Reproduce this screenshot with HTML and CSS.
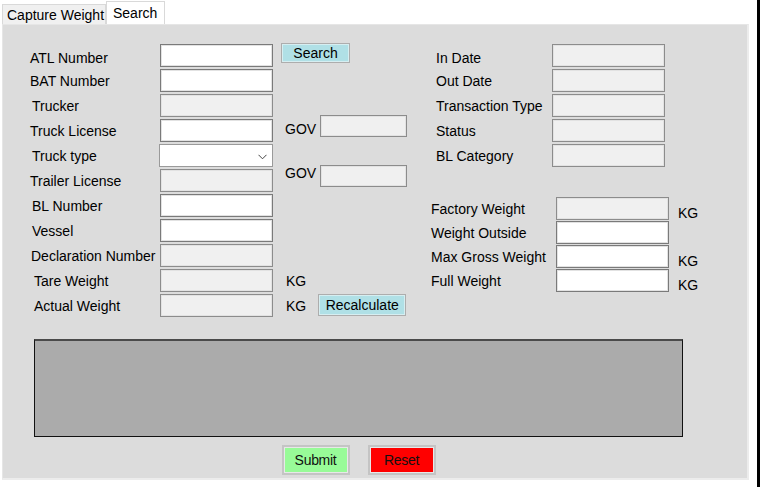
FILE: index.html
```html
<!DOCTYPE html>
<html>
<head>
<meta charset="utf-8">
<link rel="stylesheet" href="styles.css">
</head>
<body>
<div class="window">
  <div class="tabs">
    <div class="tab">Capture Weight</div>
    <div class="tab active">Search</div>
  </div>
  <div class="page">
    <div class="form">
      <div class="col-left">
        <div class="lbl low">ATL Number</div>
        <div class="inp"></div>
        <div class="cell"><button class="btn-blue search">Search</button></div>

        <div class="lbl">BAT Number</div>
        <div class="inp"></div>
        <div class="cell"></div>

        <div class="lbl i2">Trucker</div>
        <div class="inp dis"></div>
        <div class="cell"></div>

        <div class="lbl">Truck License</div>
        <div class="inp"></div>
        <div class="cell gov gov-a"><span class="gov-lbl">GOV</span><div class="inp dis gov-inp"></div></div>

        <div class="lbl i2">Truck type</div>
        <div class="inp select"><svg class="chev" width="9" height="6" viewBox="0 0 9 6"><path d="M0.5 0.8 L4.5 4.8 L8.5 0.8" fill="none" stroke="#444" stroke-width="1"/></svg></div>
        <div class="cell"></div>

        <div class="lbl">Trailer License</div>
        <div class="inp dis"></div>
        <div class="cell gov gov-b"><span class="gov-lbl">GOV</span><div class="inp dis gov-inp"></div></div>

        <div class="lbl i2">BL Number</div>
        <div class="inp"></div>
        <div class="cell"></div>

        <div class="lbl i2">Vessel</div>
        <div class="inp"></div>
        <div class="cell"></div>

        <div class="lbl i1">Declaration Number</div>
        <div class="inp dis"></div>
        <div class="cell"></div>

        <div class="lbl i4">Tare Weight</div>
        <div class="inp dis"></div>
        <div class="cell"><span class="kg kg-l">KG</span></div>

        <div class="lbl i4">Actual Weight</div>
        <div class="inp dis"></div>
        <div class="cell"><span class="kg kg-l">KG</span><button class="btn-blue recalc">Recalculate</button></div>
      </div>
      <div class="col-right">
        <div class="grid-top">
          <div class="lbl low">In Date</div><div class="inp dis"></div>
          <div class="lbl">Out Date</div><div class="inp dis"></div>
          <div class="lbl">Transaction Type</div><div class="inp dis"></div>
          <div class="lbl">Status</div><div class="inp dis"></div>
          <div class="lbl">BL Category</div><div class="inp dis"></div>
        </div>
        <div class="grid-bot">
          <div class="lbl">Factory Weight</div><div class="inp dis"></div><span class="kg kg-r">KG</span>
          <div class="lbl">Weight Outside</div><div class="inp"></div><span></span>
          <div class="lbl">Max Gross Weight</div><div class="inp"></div><span class="kg kg-r">KG</span>
          <div class="lbl">Full Weight</div><div class="inp"></div><span class="kg kg-r">KG</span>
        </div>
      </div>
    </div>
    <div class="bottom">
      <div class="log"></div>
      <div class="actions">
        <button class="act submit">Submit</button>
        <button class="act reset">Reset</button>
      </div>
    </div>
  </div>
</div>
</body>
</html>
```

FILE: styles.css
```css
* { box-sizing: border-box; }
html, body {
  margin: 0;
  padding: 0;
  background: #ffffff;
}
body {
  font-family: "Liberation Sans", Arial, sans-serif;
  font-size: 14px;
  color: #000;
}
.window {
  width: 760px;
  height: 487px;
  border-right: 3px solid #000;
  overflow: hidden;
}
.tabs {
  height: 24px;
  display: flex;
  align-items: flex-end;
  padding-left: 2px;
}
.tab {
  height: 20px;
  width: 104px;
  padding-left: 4px;
  line-height: 21px;
  background: #f0f0f0;
  border: 1px solid #d9d9d9;
  border-bottom: none;
  white-space: nowrap;
}
.tab.active {
  height: 23px;
  width: 59px;
  padding-left: 6px;
  line-height: 22px;
  background: #ffffff;
  border-color: #d9d9d9;
}
.page {
  margin-left: 2px;
  width: 747px;
  height: 456px;
  background: #dcdcdc;
  border: 1px solid #e6e6e6;
  border-right: 2px solid #ececec;
  border-bottom: 2px solid #ececec;
}
.form {
  display: flex;
  padding-top: 19px;
  padding-left: 27px;
}
.col-left {
  width: 401px;
  display: grid;
  grid-template-columns: 130px 113px 1fr;
  grid-auto-rows: 23px;
  row-gap: 2px;
}
.lbl {
  display: flex;
  align-items: center;
  white-space: nowrap;
  line-height: 16px;
}
.lbl.low { padding-top: 5px; }
.lbl.i1 { padding-left: 1px; }
.lbl.i2 { padding-left: 2px; }
.lbl.i4 { padding-left: 4px; }
.inp {
  width: 113px;
  height: 23px;
  background: #ffffff;
  border: 1px solid #7a7a7a;
  box-shadow: inset 0 0 0 1px #e2e2e2;
}
.inp.dis {
  background: #f0f0f0;
  border-color: #8c8c8c;
}
.select {
  margin-left: -1px;
  width: 114px;
  display: flex;
  align-items: center;
  justify-content: flex-end;
  padding-right: 5px;
  border-color: #9a9a9a;
  box-shadow: none;
}
.chev { display: block; margin-top: 2px; }
.cell {
  display: flex;
  align-items: center;
}
.gov { align-items: flex-start; }
.gov-lbl {
  margin-left: 12px;
  line-height: 16px;
}
.gov-inp {
  width: 87px;
  height: 22px;
  margin-left: 4px;
}
.gov-a .gov-lbl { margin-top: 2px; }
.gov-a .gov-inp { margin-top: -4px; }
.gov-b { margin-top: -4px; }
.btn-blue {
  font-family: "Liberation Sans", Arial, sans-serif;
  font-size: 14px;
  color: #000;
  background: #b0e0e6;
  border: 1px solid #adadad;
  box-shadow: inset 0 0 0 1px #d6eef1;
  padding: 0;
  line-height: 16px;
}
.search {
  margin-left: 8px;
  width: 69px;
  height: 20px;
  align-self: flex-start;
  margin-top: -1px;
}
.kg { line-height: 16px; }
.kg-l { margin-left: 13px; }
.recalc {
  margin-left: 12px;
  width: 88px;
  height: 22px;
  margin-top: -2px;
}
.col-right {
  display: flex;
  flex-direction: column;
}
.grid-top {
  padding-left: 5px;
  display: grid;
  grid-template-columns: 116px 113px;
  grid-auto-rows: 23px;
  row-gap: 2px;
}
.grid-bot {
  margin-top: 30px;
  display: grid;
  grid-template-columns: 125px 113px auto;
  grid-auto-rows: 23px;
  row-gap: 1px;
}
.kg-r {
  margin-left: 9px;
  align-self: center;
  margin-top: 8px;
}
.bottom {
  margin-top: 22px;
  margin-left: 31px;
  width: 649px;
}
.log {
  height: 98px;
  background: #ababab;
  border: 1px solid #111;
  border-top: 2px solid #4a4a4a;
}
.actions {
  margin-top: 8px;
  display: flex;
  justify-content: center;
  gap: 18px;
}
.act {
  width: 68px;
  height: 30px;
  padding: 0;
  font-family: "Liberation Sans", Arial, sans-serif;
  font-size: 14px;
  letter-spacing: -0.3px;
  color: #111;
  border: 2px solid #c4c4c4;
  box-shadow: inset 0 0 0 1px #e8e8e8;
}
.submit { background: #98fb98; }
.reset { background: #ff0000; }
```
